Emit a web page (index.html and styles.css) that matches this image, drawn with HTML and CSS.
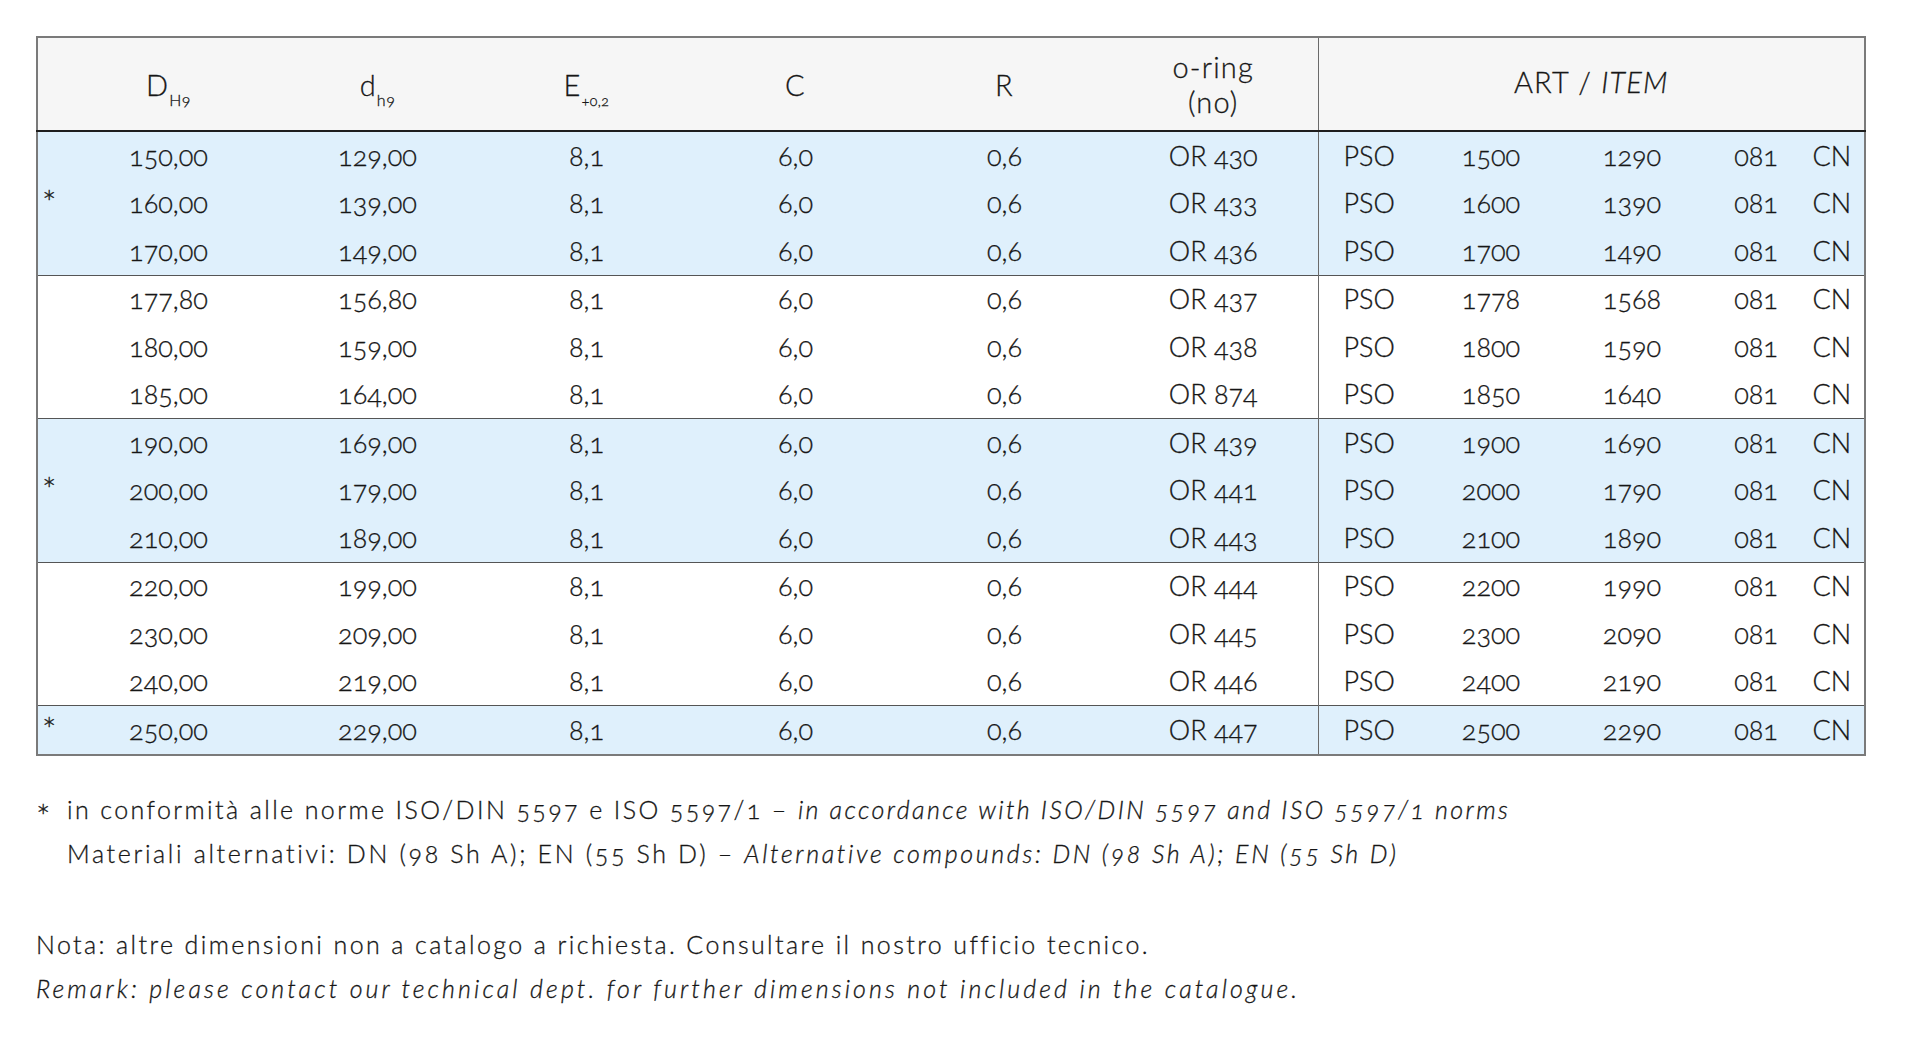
FILE: index.html
```html
<!DOCTYPE html>
<html lang="it">
<head>
<meta charset="utf-8">
<title>PSO – tabella dimensioni</title>
<link rel="stylesheet" href="styles.css">
</head>
<body>
<div class="page">
  <table class="spec">
    <colgroup>
      <col class="c-star">
      <col class="c-num"><col class="c-num"><col class="c-num"><col class="c-num"><col class="c-num"><col class="c-num">
      <col class="c-pso"><col class="c-n1"><col class="c-n2"><col class="c-code"><col class="c-cn">
    </colgroup>
    <thead>
      <tr>
        <th></th>
        <th>D<span class="sub">H9</span></th>
        <th>d<span class="sub">h9</span></th>
        <th>E<span class="sub sub-sm">+0,2</span></th>
        <th>C</th>
        <th>R</th>
        <th class="oring">o-ring<br>(no)</th>
        <th class="art" colspan="5">ART / <i>ITEM</i></th>
      </tr>
    </thead>
    <tbody class="blue">
      <tr><td></td><td>150,00</td><td>129,00</td><td>8,1</td><td>6,0</td><td>0,6</td><td>OR 430</td><td class="pso">PSO</td><td>1500</td><td>1290</td><td>081</td><td class="cn">CN</td></tr>
      <tr><td class="star">*</td><td>160,00</td><td>139,00</td><td>8,1</td><td>6,0</td><td>0,6</td><td>OR 433</td><td class="pso">PSO</td><td>1600</td><td>1390</td><td>081</td><td class="cn">CN</td></tr>
      <tr><td></td><td>170,00</td><td>149,00</td><td>8,1</td><td>6,0</td><td>0,6</td><td>OR 436</td><td class="pso">PSO</td><td>1700</td><td>1490</td><td>081</td><td class="cn">CN</td></tr>
    </tbody>
    <tbody>
      <tr><td></td><td>177,80</td><td>156,80</td><td>8,1</td><td>6,0</td><td>0,6</td><td>OR 437</td><td class="pso">PSO</td><td>1778</td><td>1568</td><td>081</td><td class="cn">CN</td></tr>
      <tr><td></td><td>180,00</td><td>159,00</td><td>8,1</td><td>6,0</td><td>0,6</td><td>OR 438</td><td class="pso">PSO</td><td>1800</td><td>1590</td><td>081</td><td class="cn">CN</td></tr>
      <tr><td></td><td>185,00</td><td>164,00</td><td>8,1</td><td>6,0</td><td>0,6</td><td>OR 874</td><td class="pso">PSO</td><td>1850</td><td>1640</td><td>081</td><td class="cn">CN</td></tr>
    </tbody>
    <tbody class="blue">
      <tr><td></td><td>190,00</td><td>169,00</td><td>8,1</td><td>6,0</td><td>0,6</td><td>OR 439</td><td class="pso">PSO</td><td>1900</td><td>1690</td><td>081</td><td class="cn">CN</td></tr>
      <tr><td class="star">*</td><td>200,00</td><td>179,00</td><td>8,1</td><td>6,0</td><td>0,6</td><td>OR 441</td><td class="pso">PSO</td><td>2000</td><td>1790</td><td>081</td><td class="cn">CN</td></tr>
      <tr><td></td><td>210,00</td><td>189,00</td><td>8,1</td><td>6,0</td><td>0,6</td><td>OR 443</td><td class="pso">PSO</td><td>2100</td><td>1890</td><td>081</td><td class="cn">CN</td></tr>
    </tbody>
    <tbody>
      <tr><td></td><td>220,00</td><td>199,00</td><td>8,1</td><td>6,0</td><td>0,6</td><td>OR 444</td><td class="pso">PSO</td><td>2200</td><td>1990</td><td>081</td><td class="cn">CN</td></tr>
      <tr><td></td><td>230,00</td><td>209,00</td><td>8,1</td><td>6,0</td><td>0,6</td><td>OR 445</td><td class="pso">PSO</td><td>2300</td><td>2090</td><td>081</td><td class="cn">CN</td></tr>
      <tr><td></td><td>240,00</td><td>219,00</td><td>8,1</td><td>6,0</td><td>0,6</td><td>OR 446</td><td class="pso">PSO</td><td>2400</td><td>2190</td><td>081</td><td class="cn">CN</td></tr>
    </tbody>
    <tbody class="blue">
      <tr><td class="star">*</td><td>250,00</td><td>229,00</td><td>8,1</td><td>6,0</td><td>0,6</td><td>OR 447</td><td class="pso">PSO</td><td>2500</td><td>2290</td><td>081</td><td class="cn">CN</td></tr>
    </tbody>
  </table>

  <div class="notes">
    <div class="starnote">
      <span class="mark">*</span>
      <div class="lines">
        <p class="l1">in conformità alle norme ISO/DIN 5597 e ISO 5597/1 – <i>in accordance with ISO/DIN 5597 and ISO 5597/1 norms</i></p>
        <p class="l2">Materiali alternativi: DN (98 Sh A); EN (55 Sh D) – <i>Alternative compounds: DN (98 Sh A); EN (55 Sh D)</i></p>
      </div>
    </div>
    <div class="remark">
      <p class="it">Nota: altre dimensioni non a catalogo a richiesta. Consultare il nostro ufficio tecnico.</p>
      <p class="en"><i>Remark: please contact our technical dept. for further dimensions not included in the catalogue.</i></p>
    </div>
  </div>
</div>
</body>
</html>
```

FILE: styles.css
```css
html, body {
  margin: 0;
  padding: 0;
  background: #ffffff;
}

body {
  font-family: "Lato", "Noto Sans", "Liberation Sans", sans-serif;
  font-weight: 300;
  color: #161616;
  font-variant-numeric: oldstyle-nums;
  font-feature-settings: "onum" 1;
  -webkit-text-stroke: 0.3px #161616;
}

.page {
  padding: 36px 0 0 36px;
}

/* ---------- table ---------- */
.spec {
  width: 1828px;
  table-layout: fixed;
  border-collapse: collapse;
  border: 2px solid #7a7a7a;
}

.c-star { width: 27px; }
.c-num  { width: 209px; }
.c-pso  { width: 103px; }
.c-n1   { width: 140px; }
.c-n2   { width: 142px; }
.c-code { width: 106px; }
.c-cn   { width: 56px; }

.spec thead th {
  height: 86px;
  padding: 0;
  background: #f6f6f6;
  font-weight: 300;
  font-size: 29px;
  letter-spacing: 1.2px;
  line-height: 35px;
  text-align: center;
  vertical-align: middle;
  border-bottom: 2px solid #1e1e1e;
}

.spec thead th.art {
  border-left: 1px solid #6a6a6a;
  padding-bottom: 6px;
}

.sub {
  font-size: 16px;
  letter-spacing: 0.5px;
  vertical-align: -10px;
  line-height: 0;
}

.sub-sm {
  font-size: 14px;
}

.spec tbody {
  border-top: 1px solid #555555;
}

.spec tbody.blue {
  background: #dff0fc;
}

.spec td {
  height: 47.5px;
  padding: 0;
  font-size: 27px;
  line-height: 30px;
  text-align: center;
  vertical-align: middle;
}

.spec td.star {
  height: 45.5px;
  text-align: left;
  padding: 0 0 2px 4px;
  font-size: 34px;
  line-height: 30px;
}

.spec td.pso {
  text-align: left;
  padding-left: 25px;
  border-left: 1px solid #6a6a6a;
}

.spec td.cn {
  text-align: right;
  padding-right: 13px;
}

/* ---------- notes ---------- */
.notes {
  margin-top: 31px;
  font-size: 25px;
  letter-spacing: 2.4px;
  line-height: 44px;
}

.notes p {
  margin: 0;
  white-space: nowrap;
}

.notes .l2 {
  letter-spacing: 2.65px;
}

.notes .en {
  letter-spacing: 3.1px;
}

.starnote {
  display: flex;
}

.starnote .mark {
  width: 31px;
  flex: none;
  font-size: 34px;
  letter-spacing: 0;
  padding-top: 7px;
  line-height: 44px;
}

.remark {
  margin-top: 47px;
}
```
